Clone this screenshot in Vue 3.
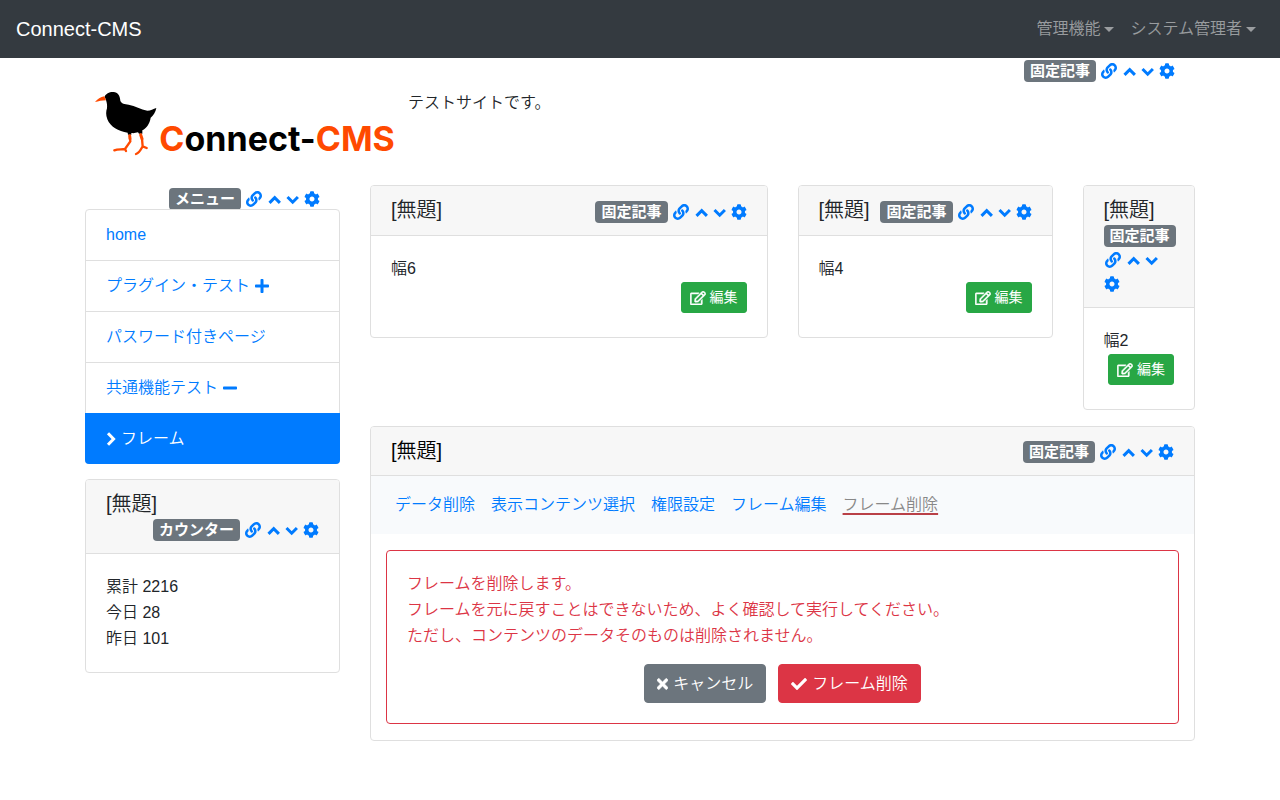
<script setup>
import { h } from 'vue'

const shapes = {
  link: { box: '0 0 512 512', w: 16, h: 16, d: 'M326.612 185.391c59.747 59.809 58.927 155.698.36 214.59-.11.12-.24.25-.36.37l-67.2 67.2c-59.27 59.27-155.699 59.262-214.96 0-59.27-59.26-59.27-155.7 0-214.96l37.106-37.106c9.84-9.84 26.786-3.3 27.294 10.606.648 17.722 3.826 35.527 9.69 52.721 1.986 5.822.567 12.262-3.783 16.612l-13.087 13.087c-28.026 28.026-28.905 73.66-1.155 101.96 28.024 28.579 74.086 28.749 102.325.51l67.2-67.19c28.191-28.191 28.073-73.757 0-101.83-3.701-3.694-7.429-6.564-10.341-8.569a16.037 16.037 0 0 1-6.947-12.606c-.396-10.567 3.348-21.456 11.698-29.806l21.054-21.055c5.521-5.521 14.182-6.199 20.584-1.731a152.482 152.482 0 0 1 20.522 17.197zM467.547 44.449c-59.261-59.262-155.69-59.27-214.96 0l-67.2 67.2c-.12.12-.25.25-.36.37-58.566 58.892-59.387 154.781.36 214.59a152.454 152.454 0 0 0 20.521 17.196c6.402 4.468 15.064 3.789 20.584-1.731l21.054-21.055c8.35-8.35 12.094-19.239 11.698-29.806a16.037 16.037 0 0 0-6.947-12.606c-2.912-2.005-6.64-4.875-10.341-8.569-28.073-28.073-28.191-73.639 0-101.83l67.2-67.19c28.239-28.239 74.3-28.069 102.325.51 27.75 28.3 26.872 73.934-1.155 101.96l-13.087 13.087c-4.35 4.35-5.769 10.79-3.783 16.612 5.864 17.194 9.042 34.999 9.69 52.721.509 13.906 17.454 20.446 27.294 10.606l37.106-37.106c59.271-59.259 59.271-155.699.001-214.959z' },
  up: { box: '0 0 14 16', w: 14, h: 16, line: true, d: 'M1.500 11.900L6.700 6.700l5.200 5.200' },
  down: { box: '0 0 14 16', w: 14, h: 16, line: true, d: 'M1.500 6L6.700 11.200 11.900 6' },
  right: { box: '0 0 10 16', w: 10, h: 16, line: true, d: 'M2 2.200L7.600 8 2 13.800' },
  cog: { box: '0 0 512 512', w: 16, h: 16, d: 'M487.4 315.7l-42.6-24.6c4.3-23.2 4.3-47 0-70.2l42.6-24.6c4.9-2.8 7.1-8.6 5.5-14-11.1-35.6-30-67.8-54.7-94.6-3.8-4.1-10-5.1-14.8-2.3L380.8 110c-17.9-15.4-38.5-27.3-60.8-35.1V25.8c0-5.6-3.9-10.5-9.4-11.7-36.7-8.2-74.3-7.8-109.2 0-5.5 1.2-9.4 6.1-9.4 11.7V75c-22.2 7.9-42.8 19.8-60.8 35.1L88.7 85.5c-4.9-2.8-11-1.9-14.8 2.3-24.7 26.7-43.6 58.9-54.7 94.6-1.7 5.4.6 11.2 5.500 14L67.3 221c-4.3 23.2-4.3 47 0 70.2l-42.6 24.6c-4.9 2.8-7.1 8.6-5.5 14 11.1 35.6 30 67.8 54.7 94.6 3.8 4.1 10 5.1 14.8 2.3l42.6-24.6c17.9 15.4 38.5 27.3 60.8 35.1v49.2c0 5.6 3.9 10.5 9.4 11.7 36.7 8.2 74.3 7.8 109.2 0 5.5-1.2 9.4-6.1 9.4-11.7v-49.2c22.2-7.9 42.8-19.8 60.8-35.1l42.6 24.6c4.9 2.8 11 1.9 14.8-2.3 24.7-26.7 43.6-58.9 54.7-94.6 1.5-5.5-.7-11.3-5.6-14.1zM256 336c-44.1 0-80-35.9-80-80s35.9-80 80-80 80 35.9 80 80-35.9 80-80 80z' },
  edit: { box: '0 0 576 512', w: 16, h: 14, bold: true, d: 'M402.3 344.9l32-32c5-5 13.7-1.5 13.7 5.7V464c0 26.5-21.5 48-48 48H48c-26.5 0-48-21.5-48-48V112c0-26.5 21.5-48 48-48h273.5c7.1 0 10.7 8.6 5.7 13.7l-32 32c-1.5 1.5-3.5 2.3-5.7 2.3H48v352h352V350.5c0-2.1.8-4.1 2.3-5.6zm156.6-201.8L296.3 405.7l-90.4 10c-26.2 2.9-48.5-19.2-45.6-45.6l10-90.4L432.9 17.1c22.9-22.9 59.9-22.9 82.7 0l43.2 43.2c22.9 22.9 22.9 60 .1 82.8zM460.1 174L402 115.9 216.2 301.8l-7.3 65.3 65.3-7.3L460.1 174zm64.8-79.7l-43.2-43.2c-4.1-4.1-10.8-4.1-14.8 0L436 82l58.1 58.1 30.9-30.9c4-4.2 4-10.8-.1-14.9z' },
  plus: { box: '0 0 448 512', w: 14, h: 16, d: 'M416 208H272V64c0-17.67-14.33-32-32-32h-32c-17.67 0-32 14.33-32 32v144H32c-17.67 0-32 14.33-32 32v32c0 17.67 14.33 32 32 32h144v144c0 17.67 14.33 32 32 32h32c17.67 0 32-14.33 32-32V304h144c17.67 0 32-14.33 32-32v-32c0-17.67-14.33-32-32-32z' },
  minus: { box: '0 0 448 512', w: 14, h: 16, d: 'M416 208H32c-17.67 0-32 14.33-32 32v32c0 17.67 14.33 32 32 32h384c17.67 0 32-14.33 32-32v-32c0-17.67-14.33-32-32-32z' },
  times: { box: '0 0 352 512', w: 11, h: 16, bold: true, d: 'M242.72 256l100.07-100.07c12.28-12.28 12.28-32.19 0-44.48l-22.24-22.24c-12.28-12.28-32.19-12.28-44.48 0L176 189.28 75.93 89.21c-12.28-12.28-32.19-12.28-44.48 0L9.21 111.45c-12.28 12.28-12.28 32.19 0 44.48L109.28 256 9.21 356.07c-12.28 12.28-12.28 32.19 0 44.48l22.24 22.24c12.28 12.28 32.2 12.28 44.48 0L176 322.72l100.07 100.07c12.28 12.28 32.2 12.28 44.48 0l22.24-22.24c12.28-12.28 12.28-32.19 0-44.48L242.72 256z' },
  check: { box: '0 0 512 512', w: 16, h: 16, d: 'M173.898 439.404l-166.4-166.4c-9.997-9.997-9.997-26.206 0-36.204l36.203-36.204c9.997-9.998 26.207-9.998 36.204 0L192 312.69 432.095 72.596c9.997-9.997 26.207-9.997 36.204 0l36.203 36.204c9.997 9.997 9.997 26.206 0 36.204l-294.4 294.401c-9.998 9.997-26.207 9.997-36.204-.001z' },
}

const Icon = (props) => {
  const s = shapes[props.name]
  let paint = { fill: 'currentColor' }
  if (s.line) {
    paint = { fill: 'none', stroke: 'currentColor', 'stroke-width': 3, 'stroke-linejoin': 'miter' }
  } else if (s.bold) {
    paint = { fill: 'currentColor', stroke: 'currentColor', 'stroke-width': 16 }
  }
  return h('svg', { viewBox: s.box, width: s.w, height: s.h, 'aria-hidden': 'true' }, [
    h('path', { d: s.d, ...paint }),
  ])
}
Icon.props = ['name']

const tools = [
  { icon: 'link', label: 'リンク' },
  { icon: 'up', label: '上へ' },
  { icon: 'down', label: '下へ' },
  { icon: 'cog', label: '設定' },
]

// Badge with the plugin name, followed by the frame's tool icons.
const Controls = (props) =>
  h('div', { class: 'controls' }, [
    h('span', { class: 'badge' }, props.label),
    ...tools.map((t) =>
      h('a', { href: '#', class: ['tool', t.icon], 'aria-label': t.label }, [h(Icon, { name: t.icon })])
    ),
  ])
Controls.props = ['label']

const menu = [
  { text: 'home' },
  { text: 'プラグイン・テスト', after: 'plus' },
  { text: 'パスワード付きページ' },
  { text: '共通機能テスト', after: 'minus' },
  { text: 'フレーム', before: 'right', active: true },
]

const frames = [
  { text: '幅6', span: 'span-6' },
  { text: '幅4', span: 'span-4' },
  { text: '幅2', span: 'span-2' },
]

const tabs = ['データ削除', '表示コンテンツ選択', '権限設定', 'フレーム編集']
</script>

<template>
  <div class="page">
    <nav class="navbar">
      <a class="brand" href="#">Connect-CMS</a>
      <div class="nav-right">
        <a class="dropdown" href="#">管理機能</a>
        <a class="dropdown" href="#">システム管理者</a>
      </div>
    </nav>

    <div class="container">
      <header class="site-header tight">
        <div class="bare-tools"><Controls label="固定記事" /></div>
        <div class="site-intro">
          <a href="#" class="logo" aria-label="Connect-CMS">
            <svg viewBox="15 6 945 240" width="315" height="80">
              <path fill="#000" d="M74 50C78 40 92 34 105 37C117 41 120 51 121 62C124 71 134 72 146 74C166 77 182 88 202 92C212 92 220 87 229 84C227 97 219 108 212 113C209 131 200 144 187 151L187 161L177 161L174 157C167 159 161 160 154 159L154 164L144 164L143 158C115 155 91 140 82 118C77 105 78 93 81 85C82 76 81 69 78 60Z" />
              <path fill="#ff4a00" d="M45 66C52 58 62 51 73 49L78 61C66 61 56 64 45 66Z" />
              <g fill="none" stroke="#ff4a00" stroke-width="7" stroke-linejoin="round" stroke-linecap="round">
                <path stroke-width="9" d="M149 167L150 176M182 164L186 176" />
                <path d="M150 176L151 184L135 207M103 211C114 207 124 209 135 207L138 213" />
                <path d="M186 176L188 199M168 222C178 219 182 209 188 199L200 204" />
              </g>
              <text class="logo-text" x="238" y="213"><tspan fill="#ff4a00">C</tspan><tspan fill="#000">onnect-</tspan><tspan fill="#ff4a00">CMS</tspan></text>
            </svg>
          </a>
          <p class="intro-text">テストサイトです。</p>
        </div>
      </header>

      <div class="columns">
        <aside>
          <div class="bare-tools"><Controls label="メニュー" /></div>
          <nav class="menu">
            <a v-for="m in menu" :key="m.text" href="#" class="menu-item" :class="{ active: m.active }">
              <Icon v-if="m.before" :name="m.before" />
              <span>{{ m.text }}</span>
              <Icon v-if="m.after" :name="m.after" />
            </a>
          </nav>

          <section class="card">
            <div class="card-header">
              <h1 class="title">[無題]</h1>
              <Controls label="カウンター" />
            </div>
            <div class="card-body">
              累計 2216<br />
              今日 28<br />
              昨日 101
            </div>
          </section>
        </aside>

        <main class="main">
          <section v-for="f in frames" :key="f.text" class="card" :class="f.span">
            <div class="card-header">
              <h1 class="title">[無題]</h1>
              <Controls label="固定記事" />
            </div>
            <div class="card-body">
              <p>{{ f.text }}</p>
              <div class="edit-row">
                <button type="button" class="btn-edit"><Icon name="edit" />編集</button>
              </div>
            </div>
          </section>

          <section class="card span-12">
            <div class="card-header tight">
              <h1 class="title dark">[無題]</h1>
              <Controls label="固定記事" />
            </div>
            <nav class="tabs">
              <a v-for="t in tabs" :key="t" href="#">{{ t }}</a>
              <span class="current">フレーム削除</span>
            </nav>
            <div class="confirm">
              <p>
                フレームを削除します。<br />
                フレームを元に戻すことはできないため、よく確認して実行してください。<br />
                ただし、コンテンツのデータそのものは削除されません。
              </p>
              <div class="actions">
                <button type="button" class="btn btn-cancel"><Icon name="times" />キャンセル</button>
                <button type="button" class="btn btn-delete"><Icon name="check" />フレーム削除</button>
              </div>
            </div>
          </section>
        </main>
      </div>
    </div>
  </div>
</template>

<style>
body {
  margin: 0;
  background: #fff;
}
</style>

<style scoped>
.page,
.page :deep(*) {
  box-sizing: border-box;
}
.page {
  font-family: "Liberation Sans", "Noto Sans CJK JP", sans-serif;
  font-size: 16px;
  font-weight: 350;
  line-height: 26px;
  color: #212529;
}
.page :deep(svg) {
  display: block;
  flex: none;
}
.page a {
  color: #007bff;
  text-decoration: none;
}
p {
  margin: 0;
}
button {
  font-family: inherit;
  cursor: pointer;
}

.navbar {
  display: flex;
  align-items: center;
  justify-content: space-between;
  padding: 16px 24px 16px 16px;
  background: #343a40;
}
.page .brand {
  font-size: 20px;
  color: #fff;
}
.nav-right {
  display: flex;
  gap: 16px;
}
.page .dropdown {
  display: flex;
  align-items: center;
  color: rgba(255, 255, 255, 0.5);
}
.dropdown::after {
  content: "";
  margin-left: 4px;
  border: 5px solid transparent;
  border-top-color: currentColor;
  border-bottom: 0;
}

.container {
  max-width: 1140px;
  margin: 0 auto;
  padding: 0 15px;
}
.bare-tools {
  display: flex;
  justify-content: flex-end;
  padding-right: 20px;
}
.site-intro {
  display: flex;
  gap: 8px;
  padding-bottom: 23px;
}
.logo-text {
  font-family: Inter, "Liberation Sans", sans-serif;
  font-weight: 700;
  font-size: 102px;
}
.intro-text {
  padding-top: 8px;
}

.columns {
  display: grid;
  grid-template-columns: minmax(0, 255fr) minmax(0, 825fr);
  gap: 30px;
  align-items: start;
}
.main {
  display: grid;
  grid-template-columns: repeat(12, minmax(0, 1fr));
  gap: 16px 30px;
  align-items: start;
}
.span-6 { grid-column: span 6; }
.span-4 { grid-column: span 4; }
.span-2 { grid-column: span 2; }
.span-12 { grid-column: span 12; }

:deep(.controls) {
  display: flex;
  flex-wrap: wrap;
  align-items: center;
  gap: 2px 4px;
  margin-top: 3px;
}
.tight :deep(.controls) {
  margin-top: 2px;
}
:deep(.badge) {
  flex: none;
  height: 22px;
  padding: 0 6px;
  border-radius: 4px;
  background: #6c757d;
  color: #fff;
  font-size: 15px;
  font-weight: 700;
  line-height: 22px;
}
:deep(.tool) {
  display: flex;
  align-items: center;
  height: 22px;
  color: #007bff;
}
:deep(.tool.link) {
  margin: 0 2px 0 1px;
}

.menu {
  position: relative;
  margin: -1px 0 15px;
  border: 1px solid #dfdfdf;
  border-radius: 4px;
  background: #fff;
}
.menu-item {
  display: flex;
  align-items: center;
  gap: 5px;
  padding: 12px 20px;
}
.menu-item + .menu-item {
  border-top: 1px solid #dfdfdf;
}
.page .menu-item.active {
  margin: 0 -1px -1px;
  padding: 12px 21px;
  border-color: #007bff;
  border-radius: 0 0 4px 4px;
  background: #007bff;
  color: #fff;
}

.card {
  border: 1px solid #dfdfdf;
  border-radius: 4px;
  background: #fff;
}
.card-header {
  display: flex;
  flex-wrap: wrap;
  justify-content: flex-end;
  padding: 12px 20px;
  border-bottom: 1px solid #dfdfdf;
  border-radius: 3px 3px 0 0;
  background: #f7f7f7;
}
.title {
  margin: 0 auto 0 0;
  font-size: 20px;
  font-weight: 350;
  line-height: 24px;
}
.title.dark {
  color: #000;
}
.card-body {
  padding: 20px;
}
.edit-row {
  display: flex;
  justify-content: flex-end;
  padding-bottom: 4px;
}
.btn-edit {
  display: flex;
  align-items: center;
  gap: 4px;
  padding: 4px 8px;
  border: 1px solid #28a745;
  border-radius: 3px;
  background: #28a745;
  color: #fff;
  font-size: 14px;
  font-weight: 400;
  line-height: 21px;
  white-space: nowrap;
}

.tabs {
  display: flex;
  flex-wrap: wrap;
  gap: 16px;
  padding: 16px 24px;
  background: #f8fafc;
}
.current {
  color: #888;
  text-decoration: underline 2px #b94047;
  text-underline-offset: 3px;
  text-decoration-skip-ink: none;
}
.confirm {
  margin: 16px 15px;
  padding: 20px;
  border: 1px solid #dc3545;
  border-radius: 4px;
  color: #dc3545;
}
.actions {
  display: flex;
  justify-content: center;
  gap: 12px;
  margin-top: 15px;
}
.btn {
  display: flex;
  align-items: center;
  gap: 5px;
  padding: 6px 12px;
  border: 1px solid;
  border-radius: 4px;
  color: #fff;
  font-size: 16px;
  font-weight: 350;
  line-height: 25px;
}
.btn-cancel {
  border-color: #6c757d;
  background: #6c757d;
}
.btn-delete {
  border-color: #dc3545;
  background: #dc3545;
}
</style>
